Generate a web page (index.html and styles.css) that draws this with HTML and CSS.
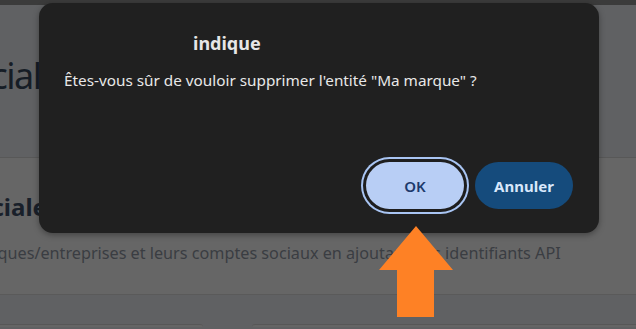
FILE: index.html
```html
<!DOCTYPE html>
<html lang="fr">
<head>
<meta charset="utf-8">
<title>Comptes sociaux</title>
<link rel="stylesheet" href="styles.css">
</head>
<body>
<div class="topbar"></div>
<main class="page">
  <h1 class="page-title">Social</h1>
  <section class="card">
    <h2 class="card-title">Présence sociale</h2>
    <p class="card-desc">Gérez vos marques/entreprises et leurs comptes sociaux en ajoutant des identifiants API</p>
  </section>
  <div class="tiles">
    <div class="tile tile-a"></div>
    <div class="tile tile-b"></div>
  </div>
</main>

<div class="dialog" role="alertdialog">
  <div class="dialog-title">indique</div>
  <div class="dialog-msg">Êtes-vous sûr de vouloir supprimer l'entité "Ma marque" ?</div>
  <div class="dialog-actions">
    <button class="btn btn-ok">OK</button>
    <button class="btn btn-cancel">Annuler</button>
  </div>
</div>

<svg class="arrow" width="74" height="91" viewBox="0 0 74 91">
  <polygon points="37,0 74,44 55,44 55,91 18,91 18,44 0,44" fill="#fe8125"/>
</svg>
</body>
</html>
```

FILE: styles.css
```css
html, body {
  margin: 0;
  padding: 0;
  overflow: hidden;
}
body {
  background: #606163;
  font-family: "Noto Sans", "Open Sans", sans-serif;
  width: 636px;
  height: 329px;
  position: relative;
}
.topbar {
  height: 5px;
  background: #3b3b3b;
}
.page {
  display: flex;
  flex-direction: column;
}
.page-title {
  margin: 0;
  padding-top: 49px;
  font-size: 36px;
  line-height: 44px;
  font-weight: 400;
  letter-spacing: -1.5px;
  color: #161d26;
  text-indent: -48px;
  white-space: nowrap;
}
.card {
  margin-top: 59px;
  background: #666666;
  border-top: 1px solid #585858;
  border-bottom: 1px solid #5a5a5a;
  padding: 33px 0 29px 0;
}
.card-title {
  margin: 0;
  font-size: 24px;
  line-height: 32px;
  font-weight: 700;
  color: #19202a;
  text-indent: -150px;
  white-space: nowrap;
}
.card-desc {
  margin: 18px 0 0 0;
  font-size: 16.2px;
  line-height: 24px;
  color: #3a3d42;
  text-indent: -111px;
  white-space: nowrap;
}
.tiles {
  display: flex;
  gap: 49px;
  margin-top: 29px;
}
.tile {
  height: 2px;
  background: #656565;
  border-top: 1px solid #575757;
  border-radius: 8px 8px 0 0;
}
.tile-a {
  width: 220px;
  margin-left: -17px;
}
.tile-b {
  flex: 1;
  margin-right: -20px;
}

.dialog {
  position: absolute;
  left: 39px;
  top: 3px;
  width: 560px;
  height: 230px;
  box-sizing: border-box;
  padding: 28px 26px 24px 25px;
  background: #202020;
  border-radius: 14px;
  box-shadow: 0 2px 6px rgba(0, 0, 0, 0.35);
  display: flex;
  flex-direction: column;
}
.dialog-title {
  padding-left: 129px;
  font-size: 18px;
  line-height: 24px;
  font-weight: 700;
  color: #e6e6e6;
}
.dialog-msg {
  margin-top: 15px;
  font-size: 15.3px;
  line-height: 20px;
  color: #e8e8e8;
}
.dialog-actions {
  margin-top: auto;
  display: flex;
  justify-content: flex-end;
  gap: 11px;
}
.btn {
  width: 98px;
  height: 47px;
  border: none;
  border-radius: 24px;
  font-family: inherit;
  font-size: 15px;
  font-weight: 600;
  padding: 0;
}
.btn-ok {
  background: #b8cef5;
  color: #1d3a6c;
  box-shadow: 0 0 0 3px #1e1e1e, 0 0 0 5px #a9c5f3;
}
.btn-cancel {
  background: #154b7c;
  color: #d8e7fb;
  font-weight: 700;
}
.arrow {
  position: absolute;
  left: 379px;
  top: 226px;
}
```
